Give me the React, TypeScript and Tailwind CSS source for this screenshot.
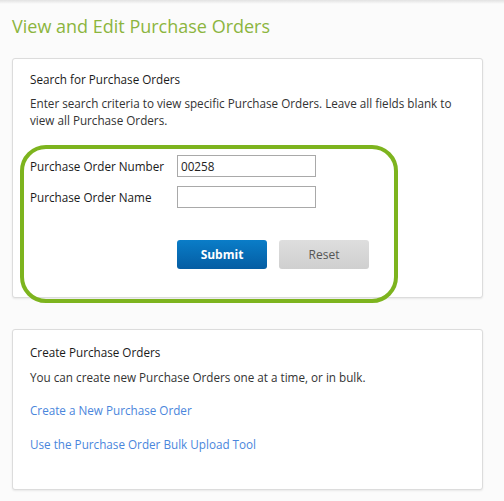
export default function App() {
  return (
    <div
      className="relative min-h-[501px] w-[504px] bg-[#fbfbfb] text-[11.7px] text-[#333]"
      style={{ fontFamily: '"Open Sans", "Liberation Sans", sans-serif' }}
    >
      <div className="h-[4px] bg-gradient-to-b from-[#e2e2e2] to-[#fbfbfb]" />
      <h1 className="ml-[12px] mt-[10px] text-[18px] leading-[24px] text-[#8cb53e]">
        View and Edit Purchase Orders
      </h1>

      <div className="mx-[12px] mt-[20px] w-[471px] rounded-[3px] border border-[#dcdcdc] bg-white px-[17px] pb-[28px] pt-[11px] shadow-[0_1px_2px_rgba(0,0,0,0.08)]">
        <h2 className="text-[11.7px] leading-[18px] text-[#1a1a1a]">Search for Purchase Orders</h2>
        <p className="mt-[7px] leading-[17px] text-[#333]">
          Enter search criteria to view specific Purchase Orders. Leave all fields blank to view all Purchase Orders.
        </p>
        <div className="mt-[26px] flex flex-col gap-[9px]">
          <div className="flex items-center">
            <label className="w-[147px] leading-[18px] text-[#1a1a1a]">Purchase Order Number</label>
            <input
              defaultValue="00258"
              className="h-[22px] w-[139px] border border-[#a9a9a9] bg-white px-[3px] text-[11.7px] text-[#222] outline-none"
            />
          </div>
          <div className="flex items-center">
            <label className="w-[147px] leading-[18px] text-[#1a1a1a]">Purchase Order Name</label>
            <input className="h-[22px] w-[139px] border border-[#a9a9a9] bg-white px-[3px] text-[11.7px] outline-none" />
          </div>
        </div>
        <div className="ml-[147px] mt-[32px] flex gap-[12px]">
          <button className="h-[29px] w-[90px] rounded-[3px] bg-gradient-to-b from-[#0a7dc8] to-[#055da3] text-[12px] font-bold text-white">
            Submit
          </button>
          <button className="h-[29px] w-[90px] rounded-[3px] bg-gradient-to-b from-[#dedede] to-[#cfcfcf] text-[12px] text-[#555]">
            Reset
          </button>
        </div>
      </div>

      <div className="mx-[12px] mt-[31px] w-[471px] rounded-[3px] border border-[#dcdcdc] bg-white px-[17px] pb-[36px] pt-[13px] shadow-[0_1px_2px_rgba(0,0,0,0.08)]">
        <h2 className="text-[11.7px] leading-[18px] text-[#1a1a1a]">Create Purchase Orders</h2>
        <p className="mt-[7px] leading-[18px] text-[#333]">
          You can create new Purchase Orders one at a time, or in bulk.
        </p>
        <a className="mt-[15px] block leading-[18px] text-[#4a86dc]" href="#">
          Create a New Purchase Order
        </a>
        <a className="mt-[16px] block leading-[18px] text-[#4a86dc]" href="#">
          Use the Purchase Order Bulk Upload Tool
        </a>
      </div>

      <div className="pointer-events-none absolute left-[20px] top-[145px] h-[158px] w-[378px] rounded-[26px] border-[4px] border-[#7db41e]" />
    </div>
  );
}
